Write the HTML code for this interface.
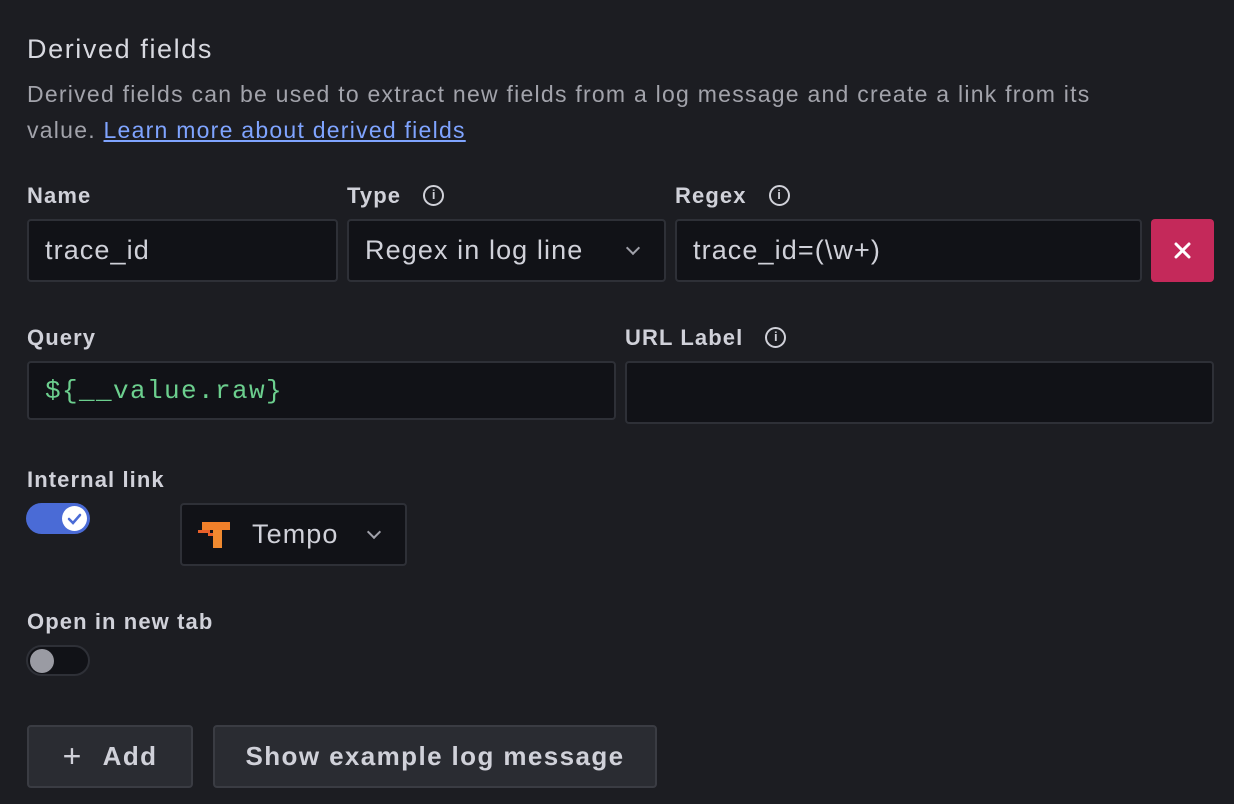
<!DOCTYPE html><html><head><style>
body{margin:0;width:1234px;height:804px;background:#1c1d22;font-family:"Liberation Sans",sans-serif;color:#d0d1d9;position:relative;overflow:hidden}
.a{position:absolute}
.lbl{font-size:22px;font-weight:bold;color:#d0d1d9;letter-spacing:1.1px}
.inp{position:absolute;background:#111217;border:2px solid #2e3037;border-radius:4px;box-sizing:border-box;font-size:27px;letter-spacing:1.1px;color:#d0d1d9;display:flex;align-items:center;padding-left:16px}
.info{display:inline-block;width:21px;height:21px;border:2px solid #d0d1d9;border-radius:50%;box-sizing:border-box;vertical-align:-3px;margin-left:22px;position:relative}
.info:after{content:"i";position:absolute;left:0;right:0;top:0px;text-align:center;font-size:13px;font-weight:bold;letter-spacing:0}
.chev{position:absolute;right:26px;top:22px;width:8px;height:8px;border-right:2px solid #a0a1aa;border-bottom:2px solid #a0a1aa;transform:rotate(45deg)}
.btn{position:absolute;background:#2a2c32;border:2px solid #3a3c43;border-radius:4px;box-sizing:border-box;font-size:26px;font-weight:bold;letter-spacing:1.4px;color:#d0d1d9;display:flex;align-items:center;justify-content:center}
</style></head><body>
<div class="a" style="left:27px;top:34px;font-size:27px;letter-spacing:1.6px;color:#d8d9e0">Derived fields</div>
<div class="a" style="left:27px;top:76px;width:1110px;font-size:23px;letter-spacing:1.25px;line-height:36px;color:#a2a3ab">Derived fields can be used to extract new fields from a log message and create a link from its value. <span style="color:#7fa4ff;text-decoration:underline">Learn more about derived fields</span></div>
<div class="a lbl" style="left:27px;top:183px">Name</div>
<div class="a lbl" style="left:347px;top:183px">Type<span class="info"></span></div>
<div class="a lbl" style="left:675px;top:183px">Regex<span class="info"></span></div>
<div class="inp" style="left:27px;top:219px;width:311px;height:63px">trace_id</div>
<div class="inp" style="left:347px;top:219px;width:319px;height:63px">Regex in log line<div class="chev"></div></div>
<div class="inp" style="left:675px;top:219px;width:467px;height:63px">trace_id=(\w+)</div>
<div class="a" style="left:1151px;top:219px;width:63px;height:63px;background:#c4295a;border-radius:4px"><svg width="63" height="63"><path d="M25 25L38 38M38 25L25 38" stroke="#fff" stroke-width="3" stroke-linecap="round"/></svg></div>
<div class="a lbl" style="left:27px;top:325px">Query</div>
<div class="a lbl" style="left:625px;top:325px">URL Label<span class="info"></span></div>
<div class="inp" style="left:27px;top:361px;width:589px;height:59px;font-family:'Liberation Mono',monospace;color:#6ccf8e;font-size:26px;letter-spacing:1.4px">${__value.raw}</div>
<div class="inp" style="left:625px;top:361px;width:589px;height:63px"></div>
<div class="a lbl" style="left:27px;top:467px">Internal link</div>
<div class="a" style="left:26px;top:503px;width:64px;height:31px;background:#4a6bd6;border-radius:16px"><div class="a" style="left:36px;top:3px;width:25px;height:25px;background:#fff;border-radius:50%"><svg width="25" height="25"><path d="M7 13l4 4 7-8" fill="none" stroke="#4a6bd6" stroke-width="2.5" stroke-linecap="round"/></svg></div></div>
<div class="inp" style="left:180px;top:503px;width:227px;height:63px;padding-left:16px"><svg width="34" height="30" style="margin-right:20px"><rect x="4" y="2" width="28" height="8" fill="#f0802a"/><rect x="15" y="10" width="9" height="18" fill="#f08a30"/><rect x="0" y="10" width="12" height="3" fill="#e8602a"/><rect x="10" y="13" width="5" height="3" fill="#e8602a"/></svg>Tempo<div class="chev"></div></div>
<div class="a lbl" style="left:27px;top:609px">Open in new tab</div>
<div class="a" style="left:26px;top:645px;width:64px;height:31px;background:#111217;border:2px solid #2e3037;box-sizing:border-box;border-radius:16px"><div class="a" style="left:2px;top:2px;width:24px;height:24px;background:#9a9ba3;border-radius:50%"></div></div>
<div class="btn" style="left:27px;top:725px;width:166px;height:63px"><span style="font-weight:normal;font-size:32px;margin-right:20px">+</span>Add</div>
<div class="btn" style="left:213px;top:725px;width:444px;height:63px">Show example log message</div>
</body></html>
